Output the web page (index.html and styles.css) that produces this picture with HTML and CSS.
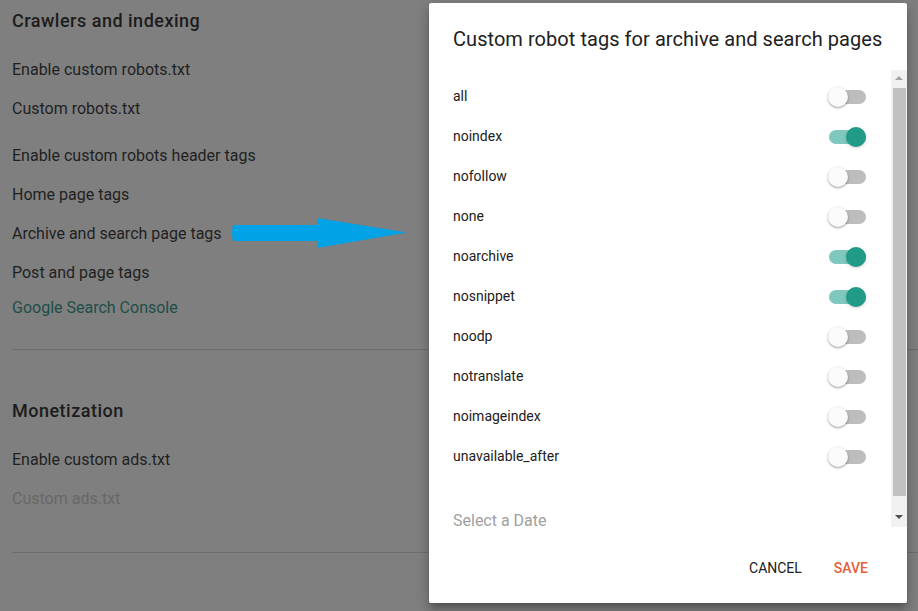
FILE: index.html
```html
<!DOCTYPE html>
<html lang="en">
<head>
<meta charset="utf-8">
<title>Custom robot tags</title>
<link rel="stylesheet" href="styles.css">
</head>
<body>
<div class="page">
  <section class="settings">
    <h2 class="sec-title">Crawlers and indexing</h2>
    <div class="row first">Enable custom robots.txt</div>
    <div class="row">Custom robots.txt</div>
    <div class="row spaced">Enable custom robots header tags</div>
    <div class="row">Home page tags</div>
    <div class="row">Archive and search page tags</div>
    <div class="row">Post and page tags</div>
    <div class="row link">Google Search Console</div>
    <hr class="divider d1">
    <h2 class="sec-title mon">Monetization</h2>
    <div class="row first">Enable custom ads.txt</div>
    <div class="row disabled">Custom ads.txt</div>
    <hr class="divider d2">
  </section>

  <svg class="arrow" width="180" height="34" viewBox="229 216 180 34" aria-hidden="true">
    <path d="M233 225 L318 225 L317 218 L407 232.5 L317 248 L318 241 L233 241 Q231 233 233 225 Z" fill="#02a3e6"/>
  </svg>

  <div class="dialog">
    <h1 class="dlg-title">Custom robot tags for archive and search pages</h1>
    <div class="scroll">
      <div class="list">
        <div class="opt"><span>all</span><span class="switch"></span></div>
        <div class="opt"><span>noindex</span><span class="switch on"></span></div>
        <div class="opt"><span>nofollow</span><span class="switch"></span></div>
        <div class="opt"><span>none</span><span class="switch"></span></div>
        <div class="opt"><span>noarchive</span><span class="switch on"></span></div>
        <div class="opt"><span>nosnippet</span><span class="switch on"></span></div>
        <div class="opt"><span>noodp</span><span class="switch"></span></div>
        <div class="opt"><span>notranslate</span><span class="switch"></span></div>
        <div class="opt"><span>noimageindex</span><span class="switch"></span></div>
        <div class="opt"><span>unavailable_after</span><span class="switch"></span></div>
        <div class="date">Select a Date</div>
      </div>
      <div class="scrollbar">
        <span class="sb-up"></span>
        <span class="sb-thumb"></span>
        <span class="sb-down"></span>
      </div>
    </div>
    <div class="actions">
      <button class="btn cancel">CANCEL</button>
      <button class="btn save">SAVE</button>
    </div>
  </div>
</div>
</body>
</html>
```
FILE: styles.css
```css
* { box-sizing: border-box; }
html, body {
  margin: 0;
  padding: 0;
  width: 918px;
  height: 611px;
  overflow: hidden;
  background: #7f7f7f;
  font-family: Roboto, "Liberation Sans", Arial, sans-serif;
}
.page {
  position: relative;
  width: 918px;
  height: 611px;
}
.settings {
  padding: 0 0 0 12px;
  display: flex;
  flex-direction: column;
}
.sec-title {
  margin: 0;
  height: 42px;
  line-height: 42px;
  font-size: 18px;
  font-weight: 500;
  color: #1c1c1c;
  letter-spacing: 0.5px;
}
.sec-title.mon { margin-top: 40px; }
.row {
  height: 39px;
  line-height: 39px;
  font-size: 16px;
  color: #1f1f1f;
  white-space: nowrap;
}
.row.first { margin-top: 7.5px; }
.row.spaced { margin-top: 8px; }
.row.link {
  height: 31px;
  line-height: 31px;
  color: #1e4e48;
}
.row.disabled { color: #686868; }
.divider {
  margin: 0;
  border: 0;
  height: 1px;
  background: #6e6e6e;
}
.divider.d1 { margin-top: 26.5px; }
.divider.d2 { margin-top: 34px; }

.arrow {
  position: absolute;
  left: 229px;
  top: 216px;
}

.dialog {
  position: absolute;
  left: 429px;
  top: 3px;
  width: 478px;
  height: 600px;
  background: #fff;
  border-radius: 2px;
  box-shadow: 0 8px 10px 1px rgba(0,0,0,.14), 0 3px 14px 2px rgba(0,0,0,.12), 0 5px 5px -3px rgba(0,0,0,.2);
  display: flex;
  flex-direction: column;
}
.dlg-title {
  margin: 0;
  padding: 22px 0 0 24px;
  height: 67px;
  font-size: 20px;
  line-height: 28px;
  font-weight: 400;
  color: #212121;
  letter-spacing: 0.05px;
  white-space: nowrap;
}
.scroll {
  height: 457px;
  display: flex;
}
.list {
  flex: 1;
  padding: 6px 25px 0 24px;
}
.opt {
  height: 40px;
  display: flex;
  align-items: center;
  justify-content: space-between;
  font-size: 14px;
  color: #212121;
}
.switch {
  position: relative;
  width: 37px;
  height: 14px;
  margin-top: 2px;
  border-radius: 7px;
  background: #bdbdbd;
}
.switch::after {
  content: "";
  position: absolute;
  left: -1px;
  top: -3px;
  width: 20px;
  height: 20px;
  border-radius: 50%;
  background: #fafafa;
  box-shadow: 0 1px 3px rgba(0,0,0,.3), 0 1px 1px rgba(0,0,0,.12);
}
.switch.on { background: #7fc8bd; }
.switch.on::after {
  left: auto;
  right: 0;
  background: #219a88;
  box-shadow: 0 1px 3px rgba(0,0,0,.2);
}
.date {
  margin-top: 37px;
  font-size: 16px;
  line-height: 16px;
  color: #a0a0a0;
}
.scrollbar {
  width: 16px;
  height: 457px;
  background: #f1f1f1;
  display: flex;
  flex-direction: column;
  align-items: center;
  padding: 0 1px;
}
.sb-up {
  width: 0;
  height: 0;
  margin-top: 6px;
  border-left: 4px solid transparent;
  border-right: 4px solid transparent;
  border-bottom: 4px solid #a3a3a3;
}
.sb-thumb {
  width: 13px;
  height: 408px;
  margin-top: 8px;
  background: #c1c1c1;
}
.sb-down {
  width: 0;
  height: 0;
  margin-top: 19px;
  border-left: 4px solid transparent;
  border-right: 4px solid transparent;
  border-top: 4px solid #505050;
}
.actions {
  display: flex;
  justify-content: flex-end;
  padding: 23px 23px 0 0;
}
.btn {
  height: 36px;
  padding: 0 16px;
  border: 0;
  background: transparent;
  font-family: Roboto, "Liberation Sans", Arial, sans-serif;
  font-size: 14px;
  letter-spacing: 0;
  cursor: pointer;
}
.btn.cancel { color: #212121; font-weight: 400; }
.btn.save { color: #e5603a; font-weight: 500; }
```
